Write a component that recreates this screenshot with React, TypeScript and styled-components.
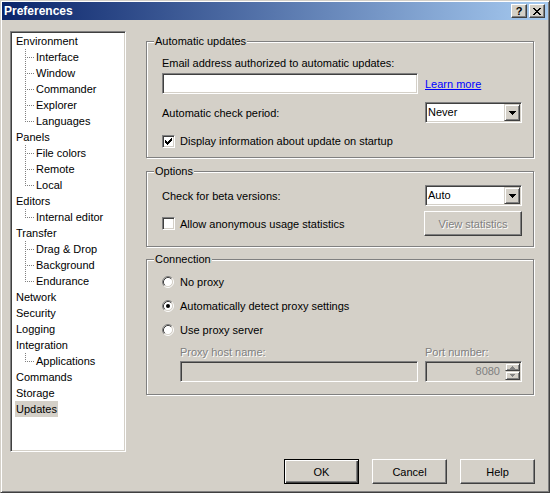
import styled, { createGlobalStyle } from "styled-components";

const GlobalStyle = createGlobalStyle`
  html, body {
    margin: 0;
    padding: 0;
    background: #d4d0c8;
  }
  body {
    font-family: "Liberation Sans", Arial, sans-serif;
    font-size: 11px;
    color: #000;
  }
  * {
    box-sizing: border-box;
  }
`;

// classic 3d edges
const sunken = `
  border: 1px solid;
  border-color: #808080 #fff #fff #808080;
  box-shadow: inset 1px 1px 0 #404040, inset -1px -1px 0 #d4d0c8;
  padding: 1px;
`;

const Window = styled.div`
  width: 550px;
  height: 493px;
  padding: 1px;
  border: 1px solid;
  border-color: #d4d0c8 #404040 #404040 #d4d0c8;
  box-shadow: inset 1px 1px 0 #fff, inset -1px -1px 0 #808080;
  background: #d4d0c8;
  display: flex;
  flex-direction: column;
`;

const TitleBar = styled.div`
  height: 18px;
  display: flex;
  align-items: center;
  padding: 0 3px 0 2px;
  background: linear-gradient(to right, #0a246a, #a6caf0);
`;

const Title = styled.span`
  flex: 1;
  color: #fff;
  font-weight: bold;
  font-size: 12px;
  line-height: 18px;
`;

const CaptionButton = styled.button`
  width: 16px;
  height: 14px;
  margin-left: 2px;
  padding: 0;
  display: flex;
  align-items: center;
  justify-content: center;
  background: #d4d0c8;
  border: 1px solid;
  border-color: #fff #404040 #404040 #fff;
  box-shadow: inset -1px -1px 0 #808080;
  font-family: "Liberation Sans", Arial, sans-serif;
  font-weight: bold;
  font-size: 11px;
  line-height: 12px;
  color: #000;
`;

const Body = styled.div`
  flex: 1;
  display: flex;
  flex-direction: column;
  padding: 11px 13px 0 8px;
`;

const Main = styled.div`
  display: flex;
  gap: 20px;
  height: 421px;
`;

const Tree = styled.div`
  ${sunken}
  width: 116px;
  height: 421px;
  background: #fff;
  overflow: hidden;
`;

const TreeRow = styled.div`
  height: 16px;
  display: flex;
  align-items: center;
  padding-left: 3px;
`;

const TreeLabel = styled.span<{ $selected?: boolean }>`
  padding: 0 1px;
  line-height: 16px;
  white-space: nowrap;
  background: ${(p) => (p.$selected ? "#d4d0c8" : "transparent")};
`;

const Pages = styled.div`
  flex: 1;
  padding-top: 10px;
  display: flex;
  flex-direction: column;
`;

const GroupBox = styled.div<{ $height: number; $gap?: number }>`
  position: relative;
  height: ${(p) => p.$height}px;
  margin-right: 1px;
  margin-top: ${(p) => p.$gap ?? 0}px;
  border: 1px solid #808080;
  box-shadow: 1px 1px 0 #fff, inset 1px 1px 0 #fff;
  display: flex;
  flex-direction: column;
  padding: 14px 11px 0 15px;
`;

const GroupCaption = styled.span`
  position: absolute;
  top: -7px;
  left: 7px;
  padding: 0 1px;
  line-height: 13px;
  background: #d4d0c8;
`;

const Label = styled.div<{ $disabled?: boolean }>`
  line-height: 14px;
  white-space: nowrap;
  color: ${(p) => (p.$disabled ? "#808080" : "#000")};
  text-shadow: ${(p) => (p.$disabled ? "1px 1px 0 #fff" : "none")};
`;

const Row = styled.div<{ $h: number; $mt?: number }>`
  display: flex;
  align-items: center;
  justify-content: space-between;
  height: ${(p) => p.$h}px;
  margin-top: ${(p) => p.$mt ?? 0}px;
`;

const Slot = styled.div<{ $w: number }>`
  width: ${(p) => p.$w}px;
  display: flex;
  align-items: center;
`;

const Indent = styled.div`
  padding-left: 18px;
  display: flex;
  flex-direction: column;
`;

const Edit = styled.div<{ $w: number; $disabled?: boolean }>`
  ${sunken}
  width: ${(p) => p.$w}px;
  height: 21px;
  display: flex;
  align-items: stretch;
  background: ${(p) => (p.$disabled ? "#d4d0c8" : "#fff")};
`;

const EditValue = styled.span`
  flex: 1;
  text-align: right;
  padding-right: 5px;
  line-height: 17px;
  color: #808080;
`;

const Spinner = styled.div`
  width: 15px;
  display: flex;
  flex-direction: column;
`;

const SpinButton = styled.div<{ $h: number }>`
  height: ${(p) => p.$h}px;
  display: flex;
  align-items: center;
  justify-content: center;
  background: #d4d0c8;
  border: 1px solid;
  border-color: #d4d0c8 #404040 #404040 #d4d0c8;
  box-shadow: inset 1px 1px 0 #fff, inset -1px -1px 0 #808080;
`;

const Combo = styled.div`
  ${sunken}
  width: 97px;
  height: 21px;
  display: flex;
  background: #fff;
`;

const ComboText = styled.span`
  flex: 1;
  padding-left: 1px;
  line-height: 17px;
`;

const DropButton = styled.div`
  width: 16px;
  height: 17px;
  display: flex;
  align-items: center;
  justify-content: center;
  background: #d4d0c8;
  border: 1px solid;
  border-color: #d4d0c8 #404040 #404040 #d4d0c8;
  box-shadow: inset 1px 1px 0 #fff, inset -1px -1px 0 #808080;
`;

const LinkText = styled.span`
  color: #0000ff;
  text-decoration: underline;
  cursor: pointer;
  line-height: 14px;
`;

const OptionRow = styled.label<{ $mt?: number; $h?: number }>`
  display: flex;
  align-items: center;
  gap: 5px;
  height: ${(p) => p.$h ?? 14}px;
  margin-top: ${(p) => p.$mt ?? 0}px;
  white-space: nowrap;
`;

const CheckBox = styled.span`
  ${sunken}
  width: 13px;
  height: 13px;
  display: flex;
  align-items: center;
  justify-content: center;
  background: #fff;
  flex-shrink: 0;
`;

const RadioMark = styled.svg`
  flex-shrink: 0;
  margin-right: 1px;
`;

const PushButton = styled.button<{ $w?: number; $default?: boolean }>`
  width: ${(p) => p.$w ?? 75}px;
  height: 25px;
  padding: 0;
  background: #d4d0c8;
  font-family: "Liberation Sans", Arial, sans-serif;
  font-size: 11px;
  color: #000;
  border: 1px solid;
  border-color: ${(p) => (p.$default ? "#000" : "#fff #404040 #404040 #fff")};
  box-shadow: ${(p) =>
    p.$default
      ? "inset 1px 1px 0 #fff, inset -1px -1px 0 #404040, inset -2px -2px 0 #808080"
      : "inset -1px -1px 0 #808080"};
  &:disabled {
    color: #808080;
    text-shadow: 1px 1px 0 #fff;
  }
`;

const Footer = styled.div`
  display: flex;
  justify-content: flex-end;
  gap: 13px;
  margin-top: 7px;
`;

function Pixels({ rows, color }: { rows: string[]; color: string }) {
  const d = rows
    .flatMap((r, y) => [...r].map((c, x) => (c === "#" ? `M${x} ${y}h1v1h-1z` : "")))
    .join("");
  return (
    <svg width={rows[0].length} height={rows.length} shapeRendering="crispEdges">
      <path d={d} fill={color} />
    </svg>
  );
}

const CHECK = ["......#", ".....##", "#...###", "##.###.", "#####..", ".###...", "..#...."];
const CLOSE = ["##....##", ".##..##.", "..####..", "...##...", "..####..", ".##..##.", "##....##"];
const DOWN = ["#######", ".#####.", "..###..", "...#..."];
const SMALL_UP = ["..#..", ".###.", "#####"];
const SMALL_DOWN = ["#####", ".###.", "..#.."];

function Connector({ last }: { last?: boolean }) {
  const dots: string[] = [];
  for (let y = 0; y <= (last ? 8 : 15); y += 2) dots.push(`M10 ${y}h1v1h-1z`);
  for (let x = 12; x <= 18; x += 2) dots.push(`M${x} 8h1v1h-1z`);
  return (
    <svg width={20} height={16} shapeRendering="crispEdges">
      <path d={dots.join("")} fill="#808080" />
    </svg>
  );
}

function Radio({ checked }: { checked?: boolean }) {
  return (
    <RadioMark width={12} height={12} viewBox="0 0 12 12">
      <circle cx={6} cy={6} r={4.5} fill="#fff" />
      <path d="M2.11 9.89A5.5 5.5 0 0 1 9.89 2.11" stroke="#808080" fill="none" />
      <path d="M9.89 2.11A5.5 5.5 0 0 1 2.11 9.89" stroke="#fff" fill="none" />
      <path d="M2.82 9.18A4.5 4.5 0 0 1 9.18 2.82" stroke="#404040" fill="none" />
      <path d="M9.18 2.82A4.5 4.5 0 0 1 2.82 9.18" stroke="#d4d0c8" fill="none" />
      {checked ? <circle cx={6} cy={6} r={2} fill="#000" /> : null}
    </RadioMark>
  );
}

function ComboBox({ value }: { value: string }) {
  return (
    <Combo>
      <ComboText>{value}</ComboText>
      <DropButton>
        <Pixels rows={DOWN} color="#000" />
      </DropButton>
    </Combo>
  );
}

type Node = { label: string; children?: string[]; selected?: boolean };

const tree: Node[] = [
  { label: "Environment", children: ["Interface", "Window", "Commander", "Explorer", "Languages"] },
  { label: "Panels", children: ["File colors", "Remote", "Local"] },
  { label: "Editors", children: ["Internal editor"] },
  { label: "Transfer", children: ["Drag & Drop", "Background", "Endurance"] },
  { label: "Network" },
  { label: "Security" },
  { label: "Logging" },
  { label: "Integration", children: ["Applications"] },
  { label: "Commands" },
  { label: "Storage" },
  { label: "Updates", selected: true },
];

export default function App() {
  return (
    <>
      <GlobalStyle />
      <Window>
        <TitleBar>
          <Title>Preferences</Title>
          <CaptionButton>?</CaptionButton>
          <CaptionButton>
            <Pixels rows={CLOSE} color="#000" />
          </CaptionButton>
        </TitleBar>
        <Body>
          <Main>
            <Tree>
              {tree.map((node) => (
                <div key={node.label}>
                  <TreeRow>
                    <TreeLabel $selected={node.selected}>{node.label}</TreeLabel>
                  </TreeRow>
                  {node.children?.map((child, i) => (
                    <TreeRow key={child}>
                      <Connector last={i === node.children!.length - 1} />
                      <TreeLabel>{child}</TreeLabel>
                    </TreeRow>
                  ))}
                </div>
              ))}
            </Tree>
            <Pages>
              <GroupBox $height={117}>
                <GroupCaption>Automatic updates</GroupCaption>
                <Label>Email address authorized to automatic updates:</Label>
                <Row $h={21} $mt={3}>
                  <Edit $w={256} />
                  <Slot $w={97}>
                    <LinkText>Learn more</LinkText>
                  </Slot>
                </Row>
                <Row $h={21} $mt={8}>
                  <Label>Automatic check period:</Label>
                  <ComboBox value="Never" />
                </Row>
                <OptionRow $mt={11}>
                  <CheckBox>
                    <Pixels rows={CHECK} color="#000" />
                  </CheckBox>
                  Display information about update on startup
                </OptionRow>
              </GroupBox>

              <GroupBox $height={76} $gap={13}>
                <GroupCaption>Options</GroupCaption>
                <Row $h={21} $mt={-1}>
                  <Label>Check for beta versions:</Label>
                  <ComboBox value="Auto" />
                </Row>
                <Row $h={25} $mt={5}>
                  <OptionRow>
                    <CheckBox />
                    Allow anonymous usage statistics
                  </OptionRow>
                  <PushButton $w={98} disabled>
                    View statistics
                  </PushButton>
                </Row>
              </GroupBox>

              <GroupBox $height={136} $gap={12}>
                <GroupCaption>Connection</GroupCaption>
                <OptionRow $h={16}>
                  <Radio />
                  No proxy
                </OptionRow>
                <OptionRow $h={16} $mt={8}>
                  <Radio checked />
                  Automatically detect proxy settings
                </OptionRow>
                <OptionRow $h={16} $mt={8}>
                  <Radio />
                  Use proxy server
                </OptionRow>
                <Indent>
                  <Row $h={14} $mt={7}>
                    <Label $disabled>Proxy host name:</Label>
                    <Slot $w={97}>
                      <Label $disabled>Port number:</Label>
                    </Slot>
                  </Row>
                  <Row $h={21} $mt={2}>
                    <Edit $w={238} $disabled />
                    <Edit $w={97} $disabled>
                      <EditValue>8080</EditValue>
                      <Spinner>
                        <SpinButton $h={8}>
                          <Pixels rows={SMALL_UP} color="#808080" />
                        </SpinButton>
                        <SpinButton $h={9}>
                          <Pixels rows={SMALL_DOWN} color="#808080" />
                        </SpinButton>
                      </Spinner>
                    </Edit>
                  </Row>
                </Indent>
              </GroupBox>
            </Pages>
          </Main>
          <Footer>
            <PushButton $default>OK</PushButton>
            <PushButton>Cancel</PushButton>
            <PushButton>Help</PushButton>
          </Footer>
        </Body>
      </Window>
    </>
  );
}
